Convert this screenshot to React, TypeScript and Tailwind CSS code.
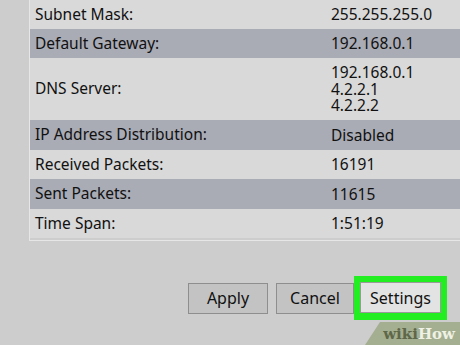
import React from 'react';

const rows: { label: string; values: string[]; dark: boolean; h: string }[] = [
  { label: 'Subnet Mask:', values: ['255.255.255.0'], dark: false, h: 'h-[29px]' },
  { label: 'Default Gateway:', values: ['192.168.0.1'], dark: true, h: 'h-[29px]' },
  { label: 'DNS Server:', values: ['192.168.0.1', '4.2.2.1', '4.2.2.2'], dark: false, h: 'h-[62px]' },
  { label: 'IP Address Distribution:', values: ['Disabled'], dark: true, h: 'h-[30px]' },
  { label: 'Received Packets:', values: ['16191'], dark: false, h: 'h-[29px]' },
  { label: 'Sent Packets:', values: ['11615'], dark: true, h: 'h-[30px]' },
  { label: 'Time Span:', values: ['1:51:19'], dark: false, h: 'h-[29px]' },
];

export default function App() {
  return (
    <div
      className="relative w-[460px] h-[345px] overflow-hidden bg-[#cdcdcd] text-[#111] text-[15.5px]"
      style={{ fontFamily: '"Noto Sans", "Open Sans", sans-serif' }}
    >
      {/* info table */}
      <div className="ml-[29px] border-l border-b border-[#e6e6e6] pb-[2px]">
        {rows.map(r => (
          <div
            key={r.label}
            className={`flex items-center ${r.h} ${r.dark ? 'bg-[#a9abb5]' : 'bg-[#d9d9d9]'}`}
          >
            <div className="w-[301px] pl-[5px]">{r.label}</div>
            <div className="flex flex-col leading-[16.5px]">
              {r.values.map(v => (
                <span key={v}>{v}</span>
              ))}
            </div>
          </div>
        ))}
      </div>

      {/* buttons */}
      <div className="flex justify-end items-center gap-[8px] pr-[13px] mt-[35px]">
        <button className="w-[80px] h-[31px] bg-[#c3c3c3] border border-[#8e8e8e] text-[16px]">Apply</button>
        <button className="w-[78px] h-[31px] bg-[#c3c3c3] border border-[#8e8e8e] text-[16px]">Cancel</button>
        <div className="-ml-[8px] p-[6px] pb-[7px] bg-[#22ee22]">
          <button className="w-[81px] h-[31px] bg-[#e3e3e3] border border-[#9a9a9a] text-[16px]">Settings</button>
        </div>
      </div>

      {/* watermark */}
      <svg className="absolute right-0 bottom-0" width="95" height="23" viewBox="0 0 95 23">
        <polygon points="0,23 15,0 95,0 95,23" fill="#a4ae91" />
      </svg>
      <div
        className="absolute right-[5px] bottom-[3px] text-[15px] font-bold leading-none"
        style={{ fontFamily: '"DejaVu Serif", "Liberation Serif", serif' }}
      >
        <span className="text-[#5e6748]">wiki</span>
        <span className="text-[#eef1e3]">How</span>
      </div>
    </div>
  );
}
